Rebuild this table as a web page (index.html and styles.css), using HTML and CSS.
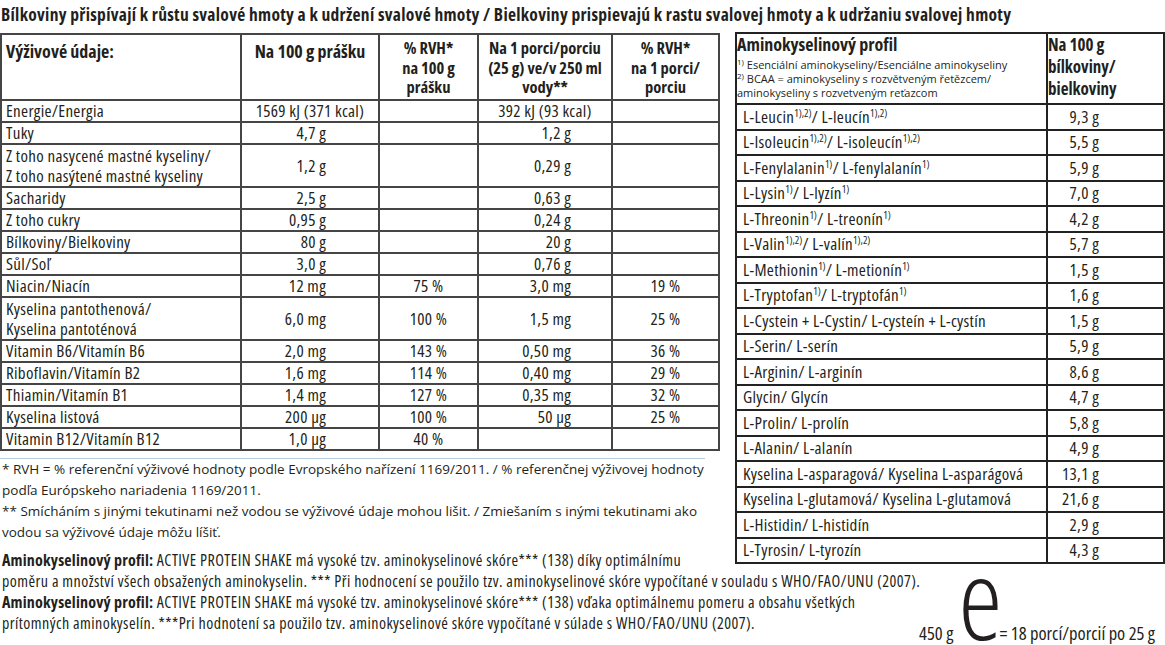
FILE: index.html
```html
<!DOCTYPE html>
<html lang="cs">
<head>
<meta charset="utf-8">
<title>Výživové údaje</title>
<link rel="stylesheet" href="styles.css">
</head>
<body>
<div class="page">
  <h1 class="title">Bílkoviny přispívají k růstu svalové hmoty a k udržení svalové hmoty / Bielkoviny prispievajú k rastu svalovej hmoty a k udržaniu svalovej hmoty</h1>
  <div class="main">
    <div class="left">
      <table class="nut">
        <colgroup>
          <col class="c1"><col class="c2"><col class="c3"><col class="c4"><col class="c5">
        </colgroup>
        <thead>
          <tr class="head">
            <th class="lab big">Výživové údaje:</th>
            <th class="big">Na 100 g prášku</th>
            <th>% RVH*<br>na 100 g<br>prášku</th>
            <th>Na 1 porci/porciu<br>(25 g) ve/v 250 ml<br>vody**</th>
            <th>% RVH*<br>na 1 porci/<br>porciu</th>
          </tr>
        </thead>
        <tbody>
          <tr><td class="lab">Energie/Energia</td><td class="ctr">1569 kJ (371 kcal)</td><td></td><td class="ctr">392 kJ (93 kcal)</td><td></td></tr>
          <tr><td class="lab">Tuky</td><td class="v2">4,7 g</td><td></td><td class="v4">1,2 g</td><td></td></tr>
          <tr class="dbl"><td class="lab">Z toho nasycené mastné kyseliny/<br>Z toho nasýtené mastné kyseliny</td><td class="v2">1,2 g</td><td></td><td class="v4">0,29 g</td><td></td></tr>
          <tr><td class="lab">Sacharidy</td><td class="v2">2,5 g</td><td></td><td class="v4">0,63 g</td><td></td></tr>
          <tr><td class="lab">Z toho cukry</td><td class="v2">0,95 g</td><td></td><td class="v4">0,24 g</td><td></td></tr>
          <tr><td class="lab">Bílkoviny/Bielkoviny</td><td class="v2">80 g</td><td></td><td class="v4">20 g</td><td></td></tr>
          <tr><td class="lab">Sůl/Soľ</td><td class="v2">3,0 g</td><td></td><td class="v4">0,76 g</td><td></td></tr>
          <tr><td class="lab">Niacin/Niacín</td><td class="v2">12 mg</td><td class="ctr">75 %</td><td class="v4">3,0 mg</td><td class="ctr">19 %</td></tr>
          <tr class="dbl"><td class="lab">Kyselina pantothenová/<br>Kyselina pantoténová</td><td class="v2">6,0 mg</td><td class="ctr">100 %</td><td class="v4">1,5 mg</td><td class="ctr">25 %</td></tr>
          <tr><td class="lab">Vitamin B6/Vitamín B6</td><td class="v2">2,0 mg</td><td class="ctr">143 %</td><td class="v4">0,50 mg</td><td class="ctr">36 %</td></tr>
          <tr><td class="lab">Riboflavin/Vitamín B2</td><td class="v2">1,6 mg</td><td class="ctr">114 %</td><td class="v4">0,40 mg</td><td class="ctr">29 %</td></tr>
          <tr><td class="lab">Thiamin/Vitamín B1</td><td class="v2">1,4 mg</td><td class="ctr">127 %</td><td class="v4">0,35 mg</td><td class="ctr">32 %</td></tr>
          <tr><td class="lab">Kyselina listová</td><td class="v2">200 µg</td><td class="ctr">100 %</td><td class="v4">50 µg</td><td class="ctr">25 %</td></tr>
          <tr><td class="lab">Vitamin B12/Vitamín B12</td><td class="v2">1,0 µg</td><td class="ctr">40 %</td><td></td><td></td></tr>
        </tbody>
      </table>
      <div class="notes">
        <p>* RVH = % referenční výživové hodnoty podle Evropského nařízení 1169/2011. / % referenčnej výživovej hodnoty<br>podľa Európskeho nariadenia 1169/2011.</p>
        <p>** Smícháním s jinými tekutinami než vodou se výživové údaje mohou lišit. / Zmiešaním s inými tekutinami ako<br>vodou sa výživové údaje môžu líšiť.</p>
      </div>
      <div class="profile">
        <p><b>Aminokyselinový profil:</b> ACTIVE PROTEIN SHAKE má vysoké tzv. aminokyselinové skóre*** (138) díky optimálnímu<br>poměru a množství všech obsažených aminokyselin. *** Při hodnocení se použilo tzv. aminokyselinové skóre vypočítané v souladu s WHO/FAO/UNU (2007).</p>
        <p><b>Aminokyselinový profil:</b> ACTIVE PROTEIN SHAKE má vysoké tzv. aminokyselinové skóre*** (138) vďaka optimálnemu pomeru a obsahu všetkých<br>prítomných aminokyselín. ***Pri hodnotení sa použilo tzv. aminokyselinové skóre vypočítané v súlade s WHO/FAO/UNU (2007).</p>
      </div>
    </div>
    <div class="right">
      <table class="amino">
        <colgroup><col class="a1"><col class="a2"></colgroup>
        <thead>
          <tr class="ahead">
            <th class="alab">
              <span class="atitle">Aminokyselinový profil</span>
              <span class="asub"><sup>1)</sup> Esenciální aminokyseliny/Esenciálne aminokyseliny</span>
              <span class="asub"><sup>2)</sup> BCAA = aminokyseliny s rozvětveným řetězcem/</span>
              <span class="asub">aminokyseliny s rozvetveným reťazcom</span>
            </th>
            <th class="aval">Na 100 g<br>bílkoviny/<br>bielkoviny</th>
          </tr>
        </thead>
        <tbody>
          <tr><td>L-Leucin<sup>1),2)</sup>/ L-leucín<sup>1),2)</sup></td><td class="num">9,3 g</td></tr>
          <tr><td>L-Isoleucin<sup>1),2)</sup>/ L-isoleucín<sup>1),2)</sup></td><td class="num">5,5 g</td></tr>
          <tr><td>L-Fenylalanin<sup>1)</sup>/ L-fenylalanín<sup>1)</sup></td><td class="num">5,9 g</td></tr>
          <tr><td>L-Lysin<sup>1)</sup>/ L-lyzín<sup>1)</sup></td><td class="num">7,0 g</td></tr>
          <tr><td>L-Threonin<sup>1)</sup>/ L-treonín<sup>1)</sup></td><td class="num">4,2 g</td></tr>
          <tr><td>L-Valin<sup>1),2)</sup>/ L-valín<sup>1),2)</sup></td><td class="num">5,7 g</td></tr>
          <tr><td>L-Methionin<sup>1)</sup>/ L-metionín<sup>1)</sup></td><td class="num">1,5 g</td></tr>
          <tr><td>L-Tryptofan<sup>1)</sup>/ L-tryptofán<sup>1)</sup></td><td class="num">1,6 g</td></tr>
          <tr><td>L-Cystein + L-Cystin/ L-cysteín + L-cystín</td><td class="num">1,5 g</td></tr>
          <tr><td>L-Serin/ L-serín</td><td class="num">5,9 g</td></tr>
          <tr><td>L-Arginin/ L-arginín</td><td class="num">8,6 g</td></tr>
          <tr><td>Glycin/ Glycín</td><td class="num">4,7 g</td></tr>
          <tr><td>L-Prolin/ L-prolín</td><td class="num">5,8 g</td></tr>
          <tr><td>L-Alanin/ L-alanín</td><td class="num">4,9 g</td></tr>
          <tr><td>Kyselina L-asparagová/ Kyselina L-asparágová</td><td class="num">13,1 g</td></tr>
          <tr><td>Kyselina L-glutamová/ Kyselina L-glutamová</td><td class="num">21,6 g</td></tr>
          <tr><td>L-Histidin/ L-histidín</td><td class="num">2,9 g</td></tr>
          <tr><td>L-Tyrosin/ L-tyrozín</td><td class="num">4,3 g</td></tr>
        </tbody>
      </table>
      <div class="weight">
        <span class="w450">450 g</span>
        <span class="esign">e</span>
        <span class="wport">= 18 porcí/porcií po 25 g</span>
      </div>
    </div>
  </div>
</div>
</body>
</html>
```

FILE: styles.css
```css
* { box-sizing: border-box; }
html, body { margin: 0; padding: 0; background: #fff; }
body {
  font-family: "Open Sans", "Liberation Sans", sans-serif;
  font-stretch: 75%;
  color: #231f20;
  width: 1165px;
  height: 645px;
  overflow: hidden;
}
.page { padding: 0; }
.title {
  margin: 0;
  padding: 2px 0 0 1px;
  font-size: 17.5px;
  letter-spacing: 0.3px;
  line-height: 24px;
  font-weight: bold;
  white-space: nowrap;
  height: 32px;
}
.main { display: flex; gap: 17px; align-items: flex-start; }
.left { width: 718px; flex: none; }
.right { width: 428px; flex: none; display: flex; flex-direction: column; }

/* nutrition table */
.nut {
  border-collapse: collapse;
  width: 718px;
  table-layout: fixed;
  font-size: 17px;
  letter-spacing: 0.3px;
  margin-top: 1px;
}
.nut .c1 { width: 240px; }
.nut .c2 { width: 138px; }
.nut .c3 { width: 99px; }
.nut .c4 { width: 134px; }
.nut .c5 { width: 107px; }
.nut th, .nut td {
  border: 2px solid #454545;
  padding: 0;
  line-height: 20px;
  height: 22px;
  vertical-align: bottom;
  white-space: nowrap;
}
.nut .head th {
  height: 66px;
  vertical-align: top;
  font-weight: bold;
  font-size: 16.5px;
  letter-spacing: 0;
  text-align: center;
  padding-top: 3px;
  line-height: 19.5px;
}
.nut .head th.big { font-size: 18px; padding-top: 6px; line-height: 20px; }
.nut .head th.lab { text-align: left; padding-left: 4px; }
.nut td.lab { padding-left: 4px; text-align: left; }
.nut tr.dbl td { height: 43px; vertical-align: middle; line-height: 19.5px; }
.nut td.ctr { text-align: center; }
.nut td.v2 { text-align: right; padding-right: 52px; }
.nut td.v4 { text-align: right; padding-right: 40px; }

.notes {
  margin-top: 7px;
  border-top: 1px solid #b6cde2;
  padding: 0 0 0 2px;
  font-size: 13.5px;
  font-stretch: 100%;
  line-height: 21px;
  width: 705px;
}
.notes p { margin: 0; white-space: nowrap; }

.profile {
  margin-top: 7px;
  padding-left: 2px;
  font-size: 16px;
  letter-spacing: 0.45px;
  line-height: 21px;
  width: 960px;
}
.profile p { margin: 0; white-space: nowrap; }
.profile b { font-weight: bold; letter-spacing: 0.2px; }

/* amino table */
.amino {
  border-collapse: collapse;
  width: 428px;
  table-layout: fixed;
  font-size: 17px;
  letter-spacing: 0.3px;
}
.amino .a1 { width: 311px; }
.amino .a2 { width: 117px; }
.amino th, .amino td {
  border: 2px solid #222;
  padding: 0;
}
.amino td {
  height: 25.5px;
  line-height: 20px;
  padding-left: 6px;
  vertical-align: middle;
  white-space: nowrap;
}
.amino td.num { text-align: right; padding-right: 64px; padding-left: 0; }
.amino sup { font-size: 10.5px; letter-spacing: 0; line-height: 0; vertical-align: 6px; }
.ahead th { height: 71px; vertical-align: top; text-align: left; letter-spacing: 0; }
.alab { padding: 2px 0 0 6px; }
.atitle { display: block; font-size: 18px; font-weight: bold; line-height: 20px; margin-bottom: 4px; }
.asub { display: block; font-size: 11px; font-stretch: 100%; font-weight: normal; line-height: 14px; white-space: nowrap; }
.asub sup { font-size: 8px; vertical-align: 4px; line-height: 0; }
.aval { padding: 5px 0 0 4px; font-size: 17px; font-weight: bold; line-height: 22px; letter-spacing: 0.3px; }

.weight {
  display: flex;
  align-items: baseline;
  justify-content: flex-end;
  padding-right: 8px;
  margin-top: -17px;
  font-size: 18.5px;
  white-space: nowrap;
}
.w450 { margin-right: 5px; }
.esign {
  font-size: 112px;
  font-weight: 350;
  line-height: 100px;
  margin-right: -3px;
}
```
